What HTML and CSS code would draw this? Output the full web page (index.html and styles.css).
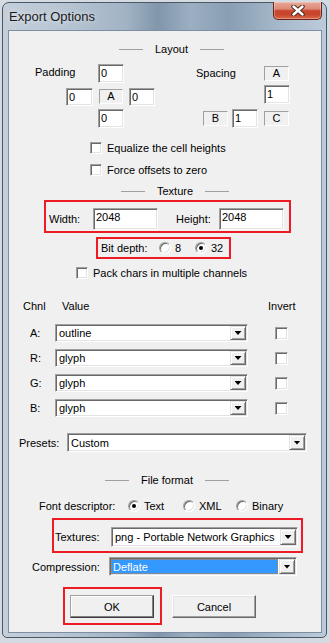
FILE: index.html
```html
<!DOCTYPE html>
<html lang="en">
<head>
  <meta charset="UTF-8">
  <title>Export Options</title>
  <link rel="stylesheet" href="styles.css">
</head>
<body>
  <div class="window">
    <div class="titlebar">
      <span class="title">Export Options</span>
      <div class="close">
        <svg width="14" height="11" viewBox="0 0 14 11">
          <path d="M2.5 1.5 L11.5 9.5 M11.5 1.5 L2.5 9.5" stroke="#4a2a24" stroke-width="4.4" stroke-linecap="round"/>
          <path d="M2.5 1.5 L11.5 9.5 M11.5 1.5 L2.5 9.5" stroke="#fff" stroke-width="2.4" stroke-linecap="round"/>
        </svg>
      </div>
    </div>

    <div class="client">
      <div class="sep sep-layout"><i></i><span>Layout</span><i></i></div>

      <div class="layout-row">
        <div class="pad-grid">
          <span class="glabel">Padding</span>
          <div class="edit p-top">0</div>
          <div class="edit p-left">0</div>
          <div class="tag p-a">A</div>
          <div class="edit p-right">0</div>
          <div class="edit p-bottom">0</div>
        </div>
        <div class="sp-grid">
          <span class="glabel sp-label">Spacing</span>
          <div class="tag s-a">A</div>
          <div class="edit s-v">1</div>
          <div class="tag s-b">B</div>
          <div class="edit s-h">1</div>
          <div class="tag s-c">C</div>
        </div>
      </div>

      <div class="check c-eq"><span class="chk"></span>Equalize the cell heights</div>
      <div class="check c-zero"><span class="chk"></span>Force offsets to zero</div>

      <div class="sep sep-texture"><i></i><span>Texture</span><i></i></div>

      <div class="hl hl-size">
        <span class="lbl-w">Width:</span>
        <div class="edit e-size">2048</div>
        <span class="lbl-h">Height:</span>
        <div class="edit e-size">2048</div>
      </div>

      <div class="hl hl-depth">
        <span class="lbl-d">Bit depth:</span>
        <span class="opt o-8"><span class="radio"></span>8</span>
        <span class="opt"><span class="radio on"></span>32</span>
      </div>

      <div class="check c-pack"><span class="chk"></span>Pack chars in multiple channels</div>

      <div class="chead">
        <span class="h-chnl">Chnl</span>
        <span class="h-value">Value</span>
        <span>Invert</span>
      </div>

      <div class="chan">
        <div class="crow">
          <span class="clabel">A:</span>
          <div class="combo c-chan"><span class="val">outline</span><span class="arrow"></span></div>
          <span class="chk"></span>
        </div>
        <div class="crow">
          <span class="clabel">R:</span>
          <div class="combo c-chan"><span class="val">glyph</span><span class="arrow"></span></div>
          <span class="chk"></span>
        </div>
        <div class="crow">
          <span class="clabel">G:</span>
          <div class="combo c-chan"><span class="val">glyph</span><span class="arrow"></span></div>
          <span class="chk"></span>
        </div>
        <div class="crow">
          <span class="clabel">B:</span>
          <div class="combo c-chan"><span class="val">glyph</span><span class="arrow"></span></div>
          <span class="chk"></span>
        </div>
      </div>

      <div class="presets">
        <span class="lbl-p">Presets:</span>
        <div class="combo c-presets"><span class="val">Custom</span><span class="arrow"></span></div>
      </div>

      <div class="sep sep-format"><i></i><span>File format</span><i></i></div>

      <div class="fdesc">
        <span class="lbl-f">Font descriptor:</span>
        <span class="opt o-text"><span class="radio on"></span>Text</span>
        <span class="opt o-xml"><span class="radio"></span>XML</span>
        <span class="opt"><span class="radio"></span>Binary</span>
      </div>

      <div class="hl hl-tex">
        <span class="lbl-t">Textures:</span>
        <div class="combo c-tex"><span class="val">png - Portable Network Graphics</span><span class="arrow"></span></div>
      </div>

      <div class="comp">
        <span class="lbl-c">Compression:</span>
        <div class="combo c-comp"><span class="val sel">Deflate</span><span class="arrow"></span></div>
      </div>

      <div class="buttons">
        <div class="hl hl-ok"><div class="btn btn-default">OK</div></div>
        <div class="btn btn-cancel">Cancel</div>
      </div>
    </div>
  </div>
</body>
</html>
```

FILE: styles.css
```css
body {
  margin: 0;
  background: #d3dae2;
  font-family: "Liberation Sans", Arial, sans-serif;
  font-size: 11px;
  color: #000;
}

/* window frame */

.window {
  margin: 2px 0 0 2px;
  width: 325px;
  box-sizing: border-box;
  border: 1px solid #4b5866;
  border-radius: 7px 7px 5px 5px;
  padding: 0 4px 4px 5px;
  background: linear-gradient(90deg, #c4cfda 0%, #b6c4d2 20%, #a2b3c5 38%, #8196ab 48%, #9cafc2 58%, #899eb3 70%, #a7bacc 86%, #bccbda 100%);
}

.titlebar {
  display: flex;
  align-items: flex-start;
  height: 27px;
}

.title {
  margin: 6px 0 0 1px;
  font-size: 13px;
  line-height: 15px;
  color: #1a1a1a;
  text-shadow: 0 0 5px rgba(255, 255, 255, 0.8);
}

.close {
  margin: -1px 0 0 auto;
  width: 49px;
  height: 18px;
  box-sizing: border-box;
  border: 1px solid #6b2318;
  border-top: none;
  border-radius: 0 0 5px 5px;
  background: linear-gradient(#e9a897 0%, #dc8b77 40%, #c7462c 52%, #c8472c 75%, #d96a4c 100%);
  box-shadow: inset 0 0 0 1px rgba(255, 255, 255, 0.3);
  display: flex;
  align-items: center;
  justify-content: center;
}

.client {
  height: 603px;
  box-sizing: border-box;
  background: #f0f0f0;
  box-shadow: inset 0 0 0 1px #7d8ea2;
  overflow: hidden;
}

/* group separators */

.sep {
  display: flex;
  align-items: center;
  gap: 12px;
  height: 14px;
  line-height: 14px;
}

.sep i {
  width: 24px;
  height: 1px;
  background: #a0a0a0;
}

.sep-layout { margin-top: 12px; padding-left: 111px; }
.sep-texture { margin-top: 6px; padding-left: 113px; }
.sep-format { margin-top: 21px; padding-left: 97px; }

/* classic controls */

.edit {
  box-sizing: border-box;
  background: #fff;
  border: 1px solid;
  border-color: #a0a0a0 #fff #fff #a0a0a0;
  box-shadow: inset 1px 1px 0 #696969, inset -1px -1px 0 #e3e3e3;
  padding: 2px 0 0 2px;
  line-height: 13px;
}

.tag {
  box-sizing: border-box;
  width: 24px;
  height: 15px;
  border: 1px solid;
  border-color: #a0a0a0 #fff #fff #a0a0a0;
  text-align: center;
  line-height: 13px;
}

.chk {
  box-sizing: border-box;
  width: 12px;
  height: 12px;
  background: #fff;
  border: 1px solid;
  border-color: #a0a0a0 #fff #fff #a0a0a0;
  box-shadow: inset 1px 1px 0 #696969, inset -1px -1px 0 #e3e3e3;
}

.radio {
  box-sizing: border-box;
  width: 12px;
  height: 12px;
  border-radius: 50%;
  background: #fff;
  border: 1px solid;
  border-color: #a0a0a0 #fff #fff #a0a0a0;
  box-shadow: inset 1px 1px 0 #696969, inset -1px -1px 0 #e3e3e3;
}

.radio.on::after {
  content: "";
  display: block;
  width: 4px;
  height: 4px;
  margin: 3px;
  border-radius: 50%;
  background: #000;
}

.combo {
  box-sizing: border-box;
  display: flex;
  align-items: stretch;
  background: #fff;
  border: 1px solid;
  border-color: #a0a0a0 #fff #fff #a0a0a0;
  box-shadow: inset 1px 1px 0 #696969, inset -1px -1px 0 #e3e3e3;
  padding: 1px;
}

.combo .val {
  flex: 1;
  display: flex;
  align-items: center;
  padding-left: 2px;
  white-space: nowrap;
  overflow: hidden;
}

.combo .val.sel {
  margin-right: 1px;
  background: #3399ff;
  color: #fff;
  outline: 1px dotted #d08030;
  outline-offset: -1px;
}

.combo .arrow {
  box-sizing: border-box;
  width: 16px;
  background: #f0f0f0;
  border: 1px solid;
  border-color: #e3e3e3 #696969 #696969 #e3e3e3;
  box-shadow: inset 1px 1px 0 #fff, inset -1px -1px 0 #a0a0a0;
  display: flex;
  align-items: center;
  justify-content: center;
}

.combo .arrow::after {
  content: "";
  width: 7px;
  height: 4px;
  background: #000;
  clip-path: polygon(0 0, 100% 0, 50% 100%);
}

.btn {
  box-sizing: border-box;
  width: 84px;
  height: 23px;
  background: #f0f0f0;
  border: 1px solid;
  border-color: #fff #696969 #696969 #fff;
  box-shadow: inset -1px -1px 0 #a0a0a0, inset 1px 1px 0 #e3e3e3;
  display: flex;
  align-items: center;
  justify-content: center;
}

.btn-default {
  border-color: #a0a0a0 #404040 #404040 #a0a0a0;
  box-shadow: inset -1px -1px 0 #808080, inset 1px 1px 0 #fff;
}

.btn-cancel {
  margin: 8px 0 0 10px;
}

.hl {
  box-sizing: border-box;
  border: 2px solid #ed1c24;
  display: flex;
  align-items: center;
}

/* layout block */

.layout-row {
  display: flex;
  margin-top: 8px;
  height: 64px;
}

.pad-grid {
  margin-left: 27px;
  display: grid;
  grid-template-columns: 58px 31px 31px;
  grid-template-rows: 24px 21px 19px;
}

.sp-grid {
  margin-left: 41px;
  display: grid;
  grid-template-columns: 32px 30px 32px;
  grid-template-rows: 21px 24px 19px;
}

.glabel {
  grid-row: 1;
  grid-column: 1;
  line-height: 16px;
  white-space: nowrap;
}

.sp-label {
  grid-column: 1 / span 2;
  margin-top: 1px;
}

.p-top { grid-row: 1; grid-column: 2; justify-self: end; width: 26px; height: 19px; }
.p-left { grid-row: 2; grid-column: 1; justify-self: end; width: 27px; height: 18px; }
.p-a { grid-row: 2; grid-column: 2; justify-self: end; margin: 1px 1px 0 0; }
.p-right { grid-row: 2; grid-column: 3; justify-self: end; width: 26px; height: 18px; }
.p-bottom { grid-row: 3; grid-column: 2; justify-self: end; width: 26px; height: 19px; }

.s-a { grid-row: 1; grid-column: 3; justify-self: end; width: 25px; margin: 2px 1px 0 0; }
.s-v { grid-row: 2; grid-column: 3; justify-self: end; width: 26px; height: 19px; }
.s-b { grid-row: 3; grid-column: 1; justify-self: end; width: 25px; margin-top: 2px; }
.s-h { grid-row: 3; grid-column: 2; justify-self: end; width: 26px; height: 19px; }
.s-c { grid-row: 3; grid-column: 3; justify-self: end; width: 25px; margin: 2px 1px 0 0; }

/* checkboxes */

.check {
  display: flex;
  align-items: center;
  gap: 5px;
  height: 16px;
}

.c-eq { margin-top: 12px; padding-left: 82px; }
.c-zero { margin-top: 6px; padding-left: 82px; }
.c-pack { margin-top: 6px; padding-left: 68px; }

/* texture */

.hl-size {
  margin: 2px 0 0 36px;
  width: 247px;
  height: 33px;
  padding: 6px 0 0 3px;
  align-items: flex-start;
}

.lbl-w { width: 44px; line-height: 22px; }
.lbl-h { margin-left: 18px; width: 43px; line-height: 22px; }
.e-size { width: 65px; height: 22px; }

.hl-depth {
  margin: 4px 0 0 88px;
  width: 135px;
  height: 22px;
  padding-left: 3px;
}

.lbl-d { width: 58px; }

.opt {
  display: flex;
  align-items: center;
  gap: 4px;
}

.o-8 { width: 36px; }

/* channels */

.chead {
  display: flex;
  margin-top: 18px;
  padding-left: 15px;
  line-height: 14px;
}

.h-chnl { width: 39px; }
.h-value { width: 206px; }

.chan {
  display: flex;
  flex-direction: column;
  gap: 7px;
  margin-top: 11px;
}

.crow {
  display: flex;
  align-items: center;
  height: 18px;
  padding-left: 22px;
}

.clabel { width: 25px; }
.c-chan { width: 193px; height: 18px; }

.crow .chk {
  margin-left: 27px;
  width: 13px;
  height: 13px;
}

.presets {
  display: flex;
  align-items: center;
  margin-top: 16px;
  padding-left: 11px;
}

.lbl-p { width: 48px; }
.c-presets { width: 240px; height: 19px; }

/* file format */

.fdesc {
  display: flex;
  align-items: center;
  height: 14px;
  margin-top: 12px;
  padding-left: 31px;
}

.lbl-f { width: 89px; }
.o-text { width: 55px; }
.o-xml { width: 53px; }

.hl-tex {
  margin: 5px 0 0 44px;
  width: 251px;
  height: 35px;
  padding: 7px 0 0 1px;
  align-items: flex-start;
}

.lbl-t { width: 56px; line-height: 20px; }
.c-tex { width: 187px; height: 20px; }

.comp {
  display: flex;
  align-items: center;
  margin-top: 4px;
  padding-left: 24px;
}

.lbl-c { width: 77px; }
.c-comp { width: 188px; height: 19px; }

.buttons {
  display: flex;
  align-items: flex-start;
  margin-top: 11px;
  padding-left: 55px;
}

.hl-ok {
  width: 99px;
  height: 38px;
  padding: 6px 0 0 5px;
  align-items: flex-start;
}
```
